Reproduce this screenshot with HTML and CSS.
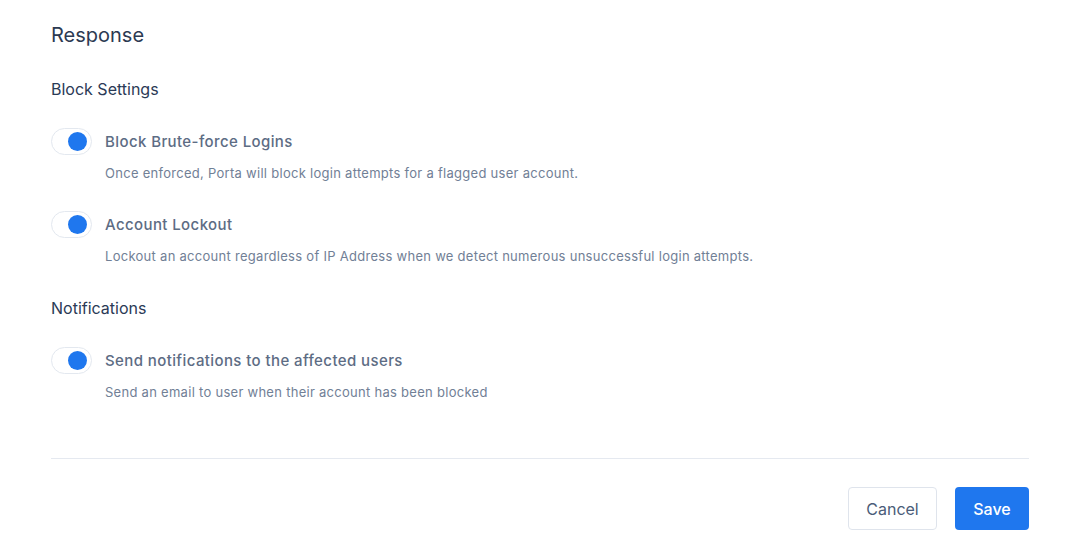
FILE: index.html
```html
<!DOCTYPE html>
<html lang="en">
<head>
    <meta charset="UTF-8">
    <meta name="viewport" content="width=device-width, initial-scale=1.0">
    <title>Response</title>
    <link rel="stylesheet" href="styles.css">
</head>
<body>
    <div class="page">
        <h1 class="title">Response</h1>

        <h3 class="section-title">Block Settings</h3>
        <div class="setting">
            <span class="toggle on"><span class="knob"></span></span>
            <div class="setting-text">
                <div class="setting-name">Block Brute-force Logins</div>
                <div class="setting-desc">Once enforced, Porta will block login attempts for a flagged user account.</div>
            </div>
        </div>
        <div class="setting">
            <span class="toggle on"><span class="knob"></span></span>
            <div class="setting-text">
                <div class="setting-name">Account Lockout</div>
                <div class="setting-desc">Lockout an account regardless of IP Address when we detect numerous unsuccessful login attempts.</div>
            </div>
        </div>

        <h3 class="section-title">Notifications</h3>
        <div class="setting">
            <span class="toggle on"><span class="knob"></span></span>
            <div class="setting-text">
                <div class="setting-name">Send notifications to the affected users</div>
                <div class="setting-desc">Send an email to user when their account has been blocked</div>
            </div>
        </div>

        <div class="footer">
            <button class="btn btn-cancel">Cancel</button>
            <button class="btn btn-save">Save</button>
        </div>
    </div>
</body>
</html>
```

FILE: styles.css
```css
body {
    margin: 0;
    padding: 0;
    background-color: #fff;
    font-family: Inter, "Noto Sans", Arial, sans-serif;
}
.page {
    padding: 20px 51px 0;
}
.title {
    margin: 0;
    font-size: 20px;
    line-height: 30px;
    font-weight: 400;
    color: #2c3a52;
}
.section-title {
    margin: 27px 0 0;
    font-size: 16px;
    line-height: 24px;
    font-weight: 400;
    color: #2a3a56;
}
.setting {
    display: flex;
    align-items: flex-start;
    gap: 13px;
    margin-top: 27px;
}
.setting + .setting {
    margin-top: 28px;
}
.setting + .section-title {
    margin-top: 30px;
}
.toggle {
    flex: none;
    width: 41px;
    height: 27px;
    box-sizing: border-box;
    border: 1px solid #e3e8ef;
    border-radius: 14px;
    background-color: #fff;
    display: flex;
    align-items: center;
    justify-content: flex-end;
    padding-right: 4px;
}
.knob {
    width: 19px;
    height: 19px;
    border-radius: 50%;
    background-color: #1f77ee;
}
.setting-name {
    font-size: 15px;
    line-height: 27px;
    font-weight: 500;
    letter-spacing: 0.4px;
    color: #5d6c84;
}
.setting-desc {
    margin-top: 8px;
    font-size: 13px;
    line-height: 20px;
    letter-spacing: 0.28px;
    color: #718096;
}
.footer {
    margin-top: 56px;
    border-top: 1px solid #e5e9f0;
    padding-top: 28px;
    display: flex;
    justify-content: flex-end;
    gap: 18px;
}
.btn {
    height: 43px;
    border-radius: 4px;
    font-family: inherit;
    font-size: 16px;
    cursor: pointer;
}
.btn-cancel {
    width: 89px;
    background-color: #fff;
    border: 1px solid #dfe4ec;
    color: #4a5c78;
}
.btn-save {
    width: 74px;
    background-color: #1f77ee;
    border: none;
    color: #fff;
    font-weight: 500;
}
```
